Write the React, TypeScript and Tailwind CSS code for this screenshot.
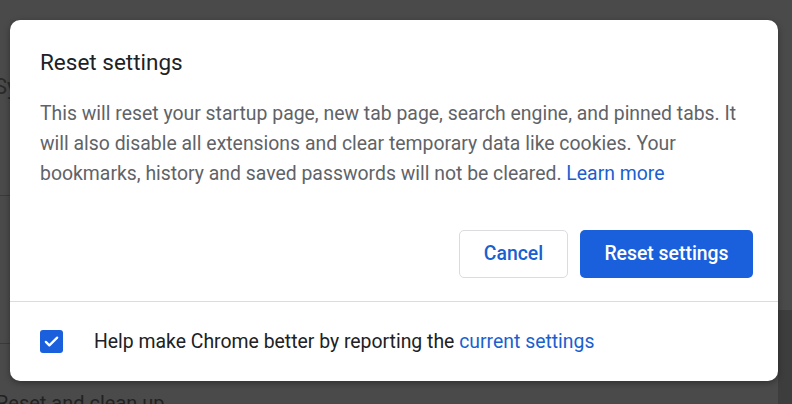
export default function App() {
    return (
        <div className="relative w-[792px] h-[404px] overflow-hidden bg-[#4a4a4a] font-['Roboto',sans-serif]">
            {/* dimmed page behind the dialog */}
            <div className="absolute left-[-6px] top-[70px] text-[22px] text-[#2a2a2a]">Sy</div>
            <div className="absolute left-0 top-[195px] w-[10px] h-px bg-[#3a3a3a]" />
            <div className="absolute left-0 top-[343px] w-[10px] h-px bg-[#3a3a3a]" />
            <div className="absolute left-[-4px] top-[388px] text-[20px] text-[#222]">Reset and clean up</div>
            <div className="absolute right-0 top-[310px] w-[14px] h-[94px] bg-[#3d3d3d]" />

            <div className="absolute left-[10px] top-[20px] w-[768px] h-[361px] bg-white rounded-[10px] shadow-[0_2px_6px_rgba(0,0,0,0.35)] flex flex-col">
                <div className="px-[30px] pt-[27px]">
                    <h2 className="text-[22.5px] leading-[30px] text-[#202124]">Reset settings</h2>
                    <p className="mt-[22px] text-[19.4px] leading-[30px] text-[#5f6368]">
                        This will reset your startup page, new tab page, search engine, and pinned tabs. It will also disable all extensions and clear temporary data like cookies. Your bookmarks, history and saved passwords will not be cleared.{' '}
                        <span className="text-[#1a5fd0]">Learn more</span>
                    </p>
                    <div className="flex justify-end gap-[12px] mt-[41px] mr-[-5px]">
                        <button className="w-[109px] h-[48px] rounded-[5px] border border-[#dadce0] text-[19.4px] font-medium text-[#1a5fd0]">
                            Cancel
                        </button>
                        <button className="w-[173px] h-[48px] rounded-[5px] bg-[#1a5fdc] text-[19.4px] font-medium text-white">
                            Reset settings
                        </button>
                    </div>
                </div>
                <div className="mt-[23px] h-px bg-[#dadce0]" />
                <div className="flex items-center px-[30px] pt-[25px]">
                    <div className="w-[23px] h-[23px] rounded-[3px] bg-[#1a5fdc] flex items-center justify-center">
                        <svg width="17" height="17" viewBox="0 0 24 24" fill="none">
                            <path d="M4 12.5l5 5L20 6.5" stroke="white" strokeWidth="3.2" strokeLinecap="round" strokeLinejoin="round" />
                        </svg>
                    </div>
                    <span className="ml-[31px] text-[19.4px] text-[#202124]">
                        Help make Chrome better by reporting the <span className="text-[#1a5fd0]">current settings</span>
                    </span>
                </div>
            </div>
        </div>
    );
}
